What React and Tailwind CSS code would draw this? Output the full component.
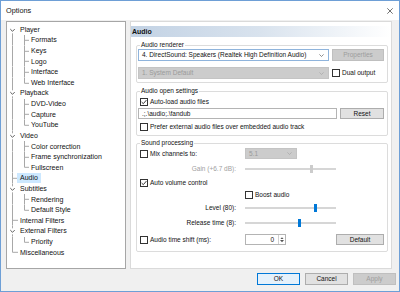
import React from "react";

const H = 10.62;
const CY = H / 2;
const LINE = "#a8a8a8";

const rows = [
  ["Player", "p", { first: true }],
  ["Formats", "c"],
  ["Keys", "c"],
  ["Logo", "c"],
  ["Interface", "c"],
  ["Web Interface", "c", { last: true }],
  ["Playback", "p"],
  ["DVD-Video", "c"],
  ["Capture", "c"],
  ["YouTube", "c", { last: true }],
  ["Video", "p"],
  ["Color correction", "c"],
  ["Frame synchronization", "c"],
  ["Fullscreen", "c", { last: true }],
  ["Audio", "l", { sel: true }],
  ["Subtitles", "p"],
  ["Rendering", "c"],
  ["Default Style", "c", { last: true }],
  ["Internal Filters", "l"],
  ["External Filters", "p"],
  ["Priority", "c", { last: true }],
  ["Miscellaneous", "l", { lastRoot: true }],
];

function Conn({ kind, o = {} }) {
  const w = kind === "c" ? 23 : 13;
  const segs = [];
  if (kind === "p") {
    if (!o.first) segs.push([5.5, 0, 5.5, CY - 3]);
    segs.push([5.5, CY + 3, 5.5, H]);
  } else if (kind === "l") {
    segs.push([5.5, 0, 5.5, o.lastRoot ? CY : H]);
    segs.push([5.5, CY, 11, CY]);
  } else {
    segs.push([5.5, 0, 5.5, H]);
    segs.push([17.5, 0, 17.5, o.last ? CY : H]);
    segs.push([17.5, CY, 22, CY]);
  }
  return (
    <svg width={w} height={H} className="shrink-0 block">
      {segs.map((s, i) => (
        <line key={i} x1={s[0]} y1={s[1]} x2={s[2]} y2={s[3]} stroke={LINE} strokeWidth="1" />
      ))}
      {kind === "p" && (
        <path d={`M3.3 ${CY - 1.2} L5.5 ${CY + 1} L7.7 ${CY - 1.2}`} stroke="#4a4a4a" strokeWidth="0.9" fill="none" />
      )}
    </svg>
  );
}

function Check({ checked }) {
  return (
    <span className="w-[8px] h-[8px] border border-[#333333] bg-white flex items-center justify-center shrink-0">
      {checked && (
        <svg width="6" height="6" viewBox="0 0 6 6" className="block">
          <path d="M0.6 3 L2.3 4.7 L5.4 1.1" stroke="#222" strokeWidth="0.9" fill="none" />
        </svg>
      )}
    </span>
  );
}

function Chev({ color = "#555" }) {
  return (
    <svg width="5" height="3" viewBox="0 0 5 3" className="block shrink-0">
      <path d="M0.4 0.4 L2.5 2.5 L4.6 0.4" stroke={color} strokeWidth="0.7" fill="none" />
    </svg>
  );
}

function Slider({ thumb, disabled }) {
  return (
    <div className="relative w-[91px] h-[10px] flex items-center">
      <div className="w-full h-[2px] bg-[#e7e7e7] border-y border-[#d6d6d6]" />
      <div
        className={`absolute top-[1px] w-[3px] h-[8px] ${disabled ? "bg-[#cccccc]" : "bg-[#0078d7]"}`}
        style={{ left: thumb }}
      />
    </div>
  );
}

function Btn({ children, w, disabled, def, h = "h-[12px]" }) {
  return (
    <div
      className={`${w} ${h} flex items-center justify-center border shrink-0 ${
        disabled
          ? "bg-[#cccccc] border-[#bfbfbf] text-[#9d9d9d]"
          : def
          ? "bg-[#e5f1fb] border-[#0078d7]"
          : "bg-[#e1e1e1] border-[#adadad]"
      }`}
    >
      {children}
    </div>
  );
}

export default function App() {
  return (
    <div className="w-[400px] h-[292px] bg-[#f0f0f0] border border-[#6e9fd6] flex flex-col font-['Liberation_Sans',Arial,sans-serif] text-[7px] leading-[8px] text-[#111111] overflow-hidden">
      {/* title bar */}
      <div className="h-[19px] bg-white flex items-center justify-between pl-[5px] pr-[6px] shrink-0">
        <span className="text-[7.3px]">Options</span>
        <svg width="6" height="6" viewBox="0 0 6 6" className="block">
          <path d="M0.3 0.3 L5.7 5.7 M5.7 0.3 L0.3 5.7" stroke="#333" strokeWidth="0.7" />
        </svg>
      </div>

      {/* body */}
      <div className="flex pl-[5px] gap-[4px]">
        {/* tree */}
        <div className="w-[120px] h-[248px] mt-[1px] bg-white border border-[#a6a6a6] pt-[2.5px] flex flex-col shrink-0">
          {rows.map(([t, kind, o], i) => (
            <div key={i} className="flex items-center" style={{ height: H }}>
              <Conn kind={kind} o={o} />
              {o && o.sel ? (
                <span className="bg-[#cce8ff] -ml-[3px] px-[3px] h-[10px] flex items-center">{t}</span>
              ) : (
                <span className={kind === "c" ? "ml-[1px]" : ""}>{t}</span>
              )}
            </div>
          ))}
        </div>

        {/* right panel */}
        <div className="w-[262px] h-[248px] mt-[1px] bg-white border border-[#dadada] flex flex-col shrink-0 text-[6.5px]">
          <div className="mt-[4px] h-[11px] bg-linear-to-r from-[#c2d2e4] via-[#d9e3ee] to-white font-bold text-[7px] leading-[11px] pl-[1px]">
            Audio
          </div>

          {/* Audio renderer */}
          <fieldset className="ml-[5px] mt-[4px] w-[252px] border border-[#dcdcdc] rounded-[2px] pb-[3px]">
            <legend className="ml-[3px] px-[1px] leading-[8px]">Audio renderer</legend>
            <div className="flex">
              <div className="ml-[1px] w-[191px] h-[12px] border border-[#8fb4dc] bg-white flex items-center justify-between pl-[3px] pr-[4px]">
                <span className="whitespace-nowrap">4. DirectSound: Speakers (Realtek High Definition Audio)</span>
                <Chev color="#606060" />
              </div>
              <div className="ml-[3px]">
                <Btn w="w-[52px]" disabled>Properties</Btn>
              </div>
            </div>
            <div className="flex mt-[6px] items-center">
              <div className="ml-[1px] w-[191px] h-[12px] border border-[#c4c4c4] bg-[#cccccc] flex items-center justify-between pl-[3px] pr-[4px] text-[#9a9a9a]">
                <span>1. System Default</span>
                <Chev color="#a8a8a8" />
              </div>
              <div className="ml-[3px] flex items-center">
                <Check />
                <span className="ml-[2px]">Dual output</span>
              </div>
            </div>
          </fieldset>

          {/* Audio open settings */}
          <fieldset className="ml-[5px] mt-[4px] w-[252px] border border-[#dcdcdc] rounded-[2px] pb-[3px]">
            <legend className="ml-[3px] px-[1px] leading-[8px]">Audio open settings</legend>
            <div className="pt-[2px] h-[12px] flex items-center pl-[3px]">
              <Check checked />
              <span className="ml-[2px]">Auto-load audio files</span>
            </div>
            <div className="flex mt-[1px]">
              <div className="ml-[1px] w-[199px] h-[11px] border border-[#b4b4b4] bg-white flex items-center pl-[3px]">
                .;.\audio;.\fandub
              </div>
              <div className="ml-[3px]">
                <Btn w="w-[44px]" h="h-[11px]">Reset</Btn>
              </div>
            </div>
            <div className="mt-[3px] h-[10px] flex items-center pl-[3px]">
              <Check />
              <span className="ml-[2px]">Prefer external audio files over embedded audio track</span>
            </div>
          </fieldset>

          {/* Sound processing */}
          <fieldset className="ml-[5px] mt-[3px] w-[252px] border border-[#dcdcdc] rounded-[2px] pb-[6px]">
            <legend className="ml-[3px] px-[1px] leading-[8px]">Sound processing</legend>
            <div className="flex items-center mt-[1px] h-[11px]">
              <div className="w-[108px] flex items-center pl-[3px]">
                <Check />
                <span className="ml-[2px]">Mix channels to:</span>
              </div>
              <div className="w-[52px] h-[11px] border border-[#c4c4c4] bg-[#cccccc] flex items-center justify-between pl-[3px] pr-[4px] text-[#9a9a9a]">
                <span>5.1</span>
                <Chev color="#a8a8a8" />
              </div>
            </div>
            <div className="flex items-center mt-[5px] h-[10px]">
              <div className="w-[108px] text-right pr-[9px] text-[#a0a0a0]">Gain (+6.7 dB):</div>
              <Slider thumb={64.5} disabled />
            </div>
            <div className="flex items-center mt-[4px] h-[10px] pl-[3px]">
              <Check checked />
              <span className="ml-[2px]">Auto volume control</span>
            </div>
            <div className="flex items-center mt-[2px] h-[10px]">
              <div className="w-[108px]" />
              <Check />
              <span className="ml-[2px]">Boost audio</span>
            </div>
            <div className="flex items-center mt-[3px] h-[10px]">
              <div className="w-[108px] text-right pr-[9px]">Level (80):</div>
              <Slider thumb={69} />
            </div>
            <div className="flex items-center mt-[5px] h-[10px]">
              <div className="w-[108px] text-right pr-[9px]">Release time (8):</div>
              <Slider thumb={52.5} />
            </div>
            <div className="flex items-center mt-[6px] h-[11px]">
              <div className="w-[108px] flex items-center pl-[3px]">
                <Check />
                <span className="ml-[2px]">Audio time shift (ms):</span>
              </div>
              <div className="w-[41px] h-[11px] border border-[#b4b4b4] bg-white flex items-center justify-end">
                <span className="mr-[4px]">0</span>
                <div className="w-[7px] h-full border-l border-[#d0d0d0] flex flex-col items-center justify-center gap-[1px]">
                  <svg width="4" height="2.5" viewBox="0 0 4 2.5" className="block">
                    <path d="M0 2.5 L2 0.3 L4 2.5 Z" fill="#555" />
                  </svg>
                  <svg width="4" height="2.5" viewBox="0 0 4 2.5" className="block">
                    <path d="M0 0 L2 2.2 L4 0 Z" fill="#555" />
                  </svg>
                </div>
              </div>
              <div className="ml-auto mr-[3px]">
                <Btn w="w-[48px]" h="h-[11px]">Default</Btn>
              </div>
            </div>
          </fieldset>
        </div>
      </div>

      {/* bottom buttons */}
      <div className="flex justify-end gap-[5px] pr-[3px] mt-[4px] text-[6.5px]">
        <Btn w="w-[43px]" def>OK</Btn>
        <Btn w="w-[43px]">Cancel</Btn>
        <Btn w="w-[43px]" disabled>Apply</Btn>
      </div>
    </div>
  );
}
